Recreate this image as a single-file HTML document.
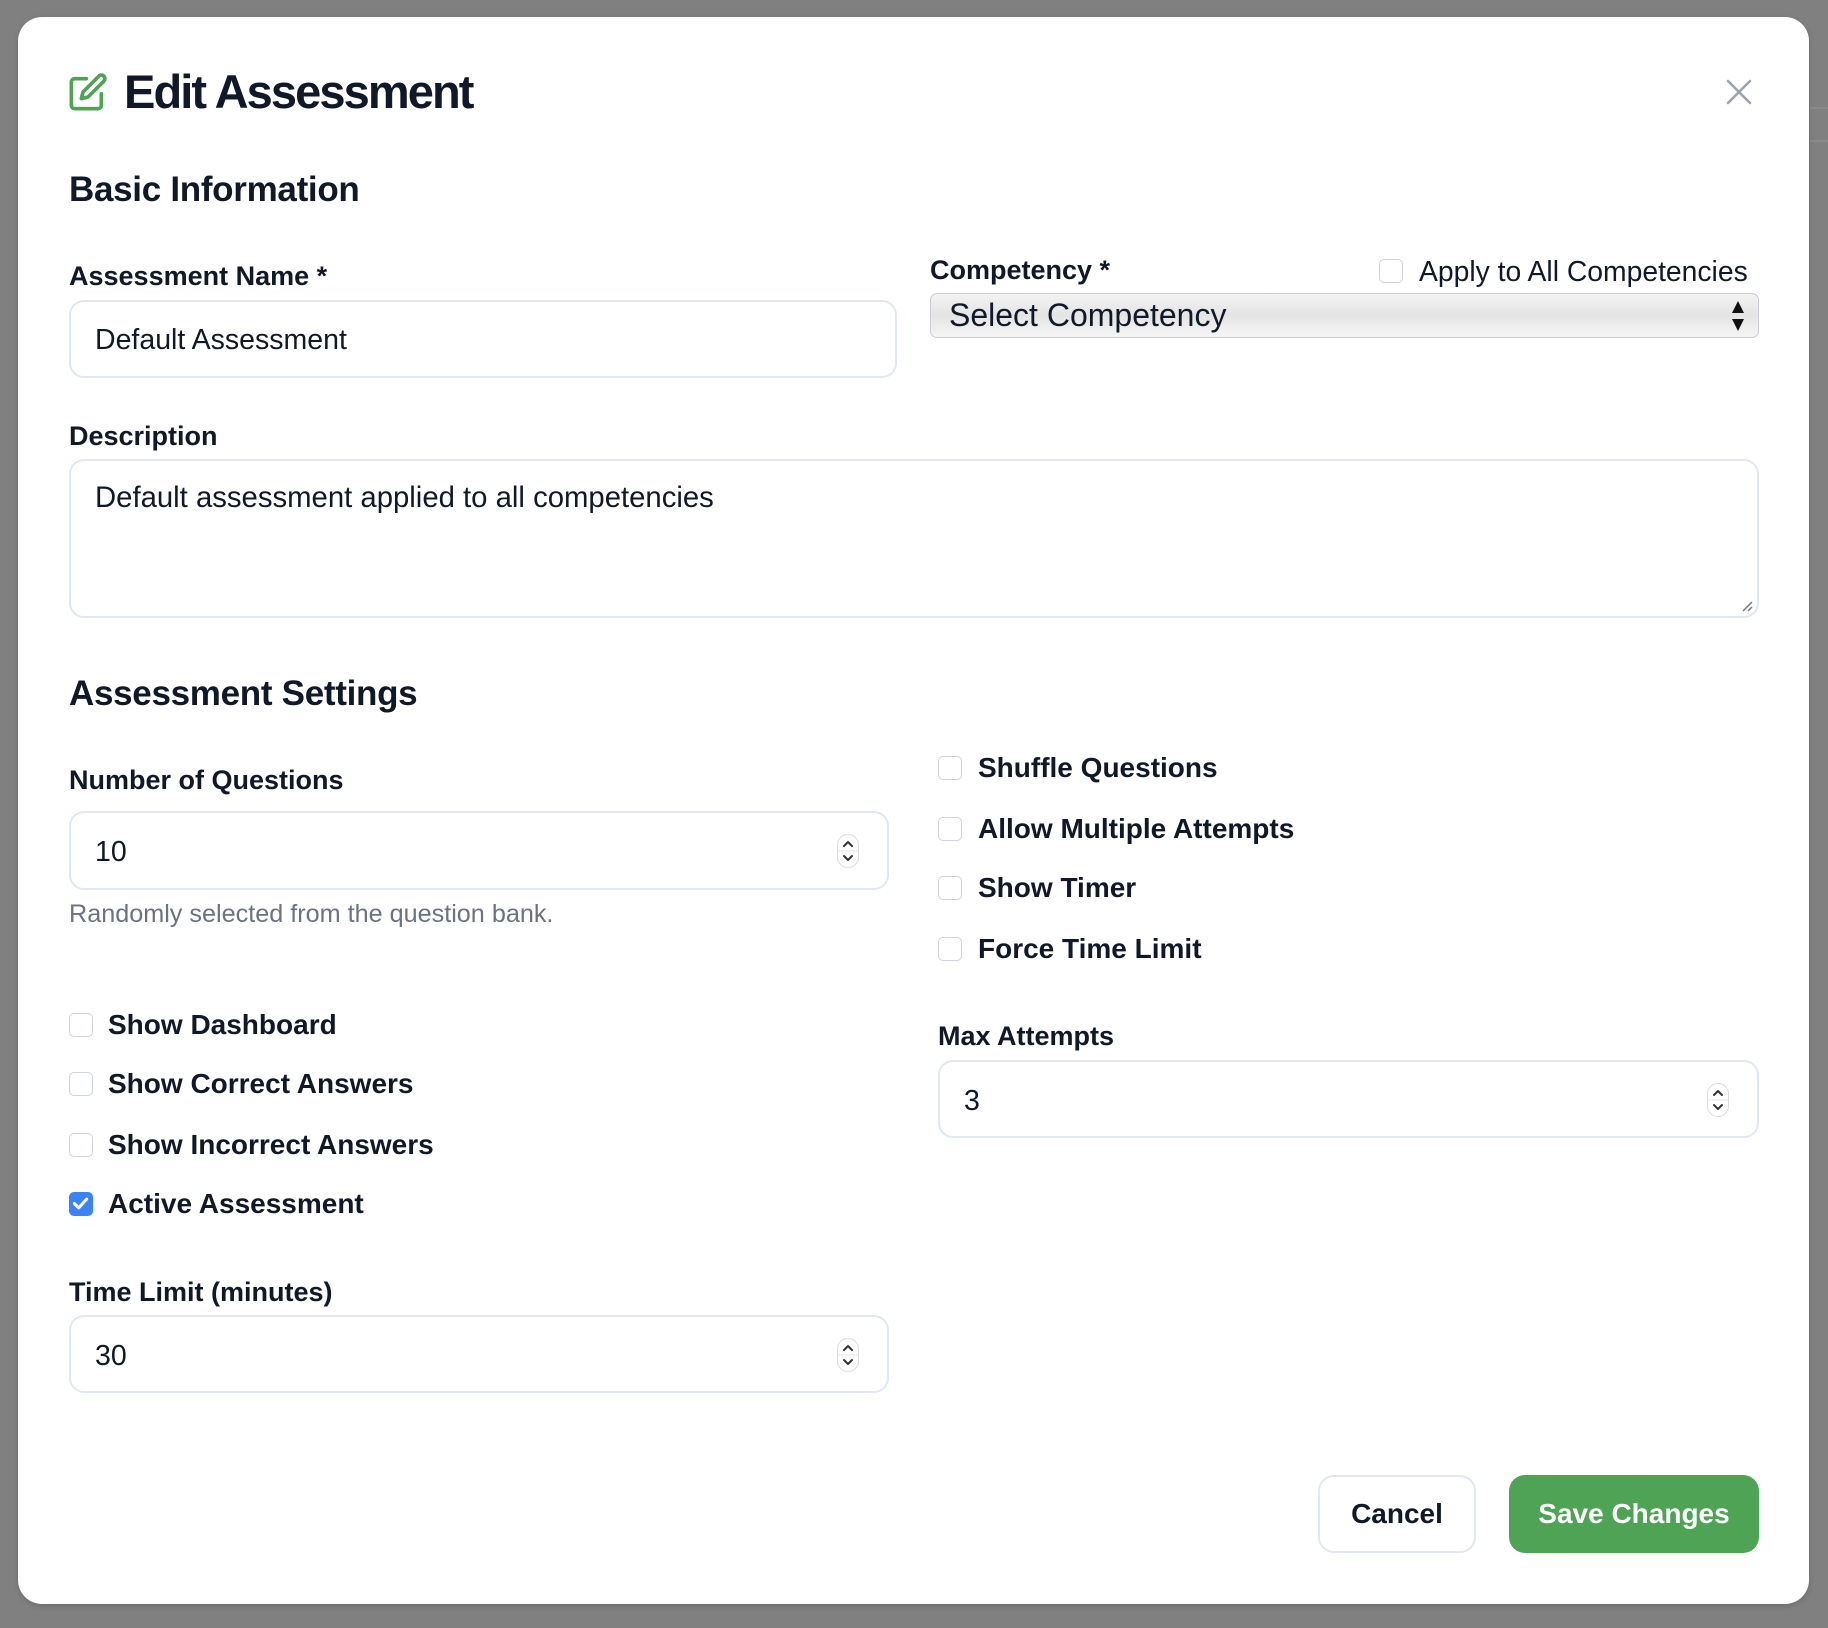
<!DOCTYPE html>
<html><head><meta charset="utf-8"><style>
*{box-sizing:border-box;margin:0;padding:0}
body{width:1828px;height:1628px;background:#808080;font-family:"Liberation Sans",sans-serif;color:#111827;position:relative;overflow:hidden}
.bgl{position:absolute;height:2px;background:#8a8a8a}
.modal{position:absolute;left:18px;top:17px;width:1791px;height:1587px;background:#fff;border-radius:24px;box-shadow:0 2px 6px rgba(0,0,0,.15)}
.a{position:absolute;white-space:nowrap}
.lbl{font-size:27px;font-weight:bold;color:#111827;line-height:1}
.h2{font-size:35px;font-weight:bold;color:#111827;letter-spacing:-0.3px}
.inp{position:absolute;border:2px solid #e2e8f0;border-radius:15px;background:#fff}
.inp span{position:absolute;left:24px;font-size:28.5px;color:#111827}
.cb{position:absolute;width:24px;height:24px;border:1.5px solid #cfd3da;border-radius:5px;background:#fff}
.ct{font-size:28px;font-weight:bold;color:#111827}
.spin{position:absolute;width:22px;height:34px}
</style></head><body>
<div class="bgl" style="left:1810px;top:107px;width:18px"></div>
<div class="bgl" style="left:1810px;top:140px;width:18px"></div>
<div class="modal"></div>
<svg class="a" style="left:68px;top:72px" width="40" height="40" viewBox="0 0 24 24" fill="none" stroke="#4ea355" stroke-width="2.2" stroke-linecap="round" stroke-linejoin="round"><path d="M11 4H4a2 2 0 0 0-2 2v14a2 2 0 0 0 2 2h14a2 2 0 0 0 2-2v-7"/><path d="M18.5 2.5a2.1 2.1 0 0 1 3 3L12 15l-4 1 1-4 9.5-9.5z"/></svg>
<div class="a" style="left:124px;top:64px;font-size:47px;font-weight:bold;letter-spacing:-1.9px;color:#111827">Edit Assessment</div>
<svg class="a" style="left:1726px;top:79px" width="26" height="26" viewBox="0 0 26 26" stroke="#9ca3af" stroke-width="2.6" stroke-linecap="round"><path d="M2 2L24 24M24 2L2 24"/></svg>
<div class="a h2" style="left:69px;top:170px">Basic Information</div>
<div class="a lbl" style="left:69px;top:263px">Assessment Name *</div>
<div class="inp" style="left:69px;top:300px;width:828px;height:78px"><span style="top:22px">Default Assessment</span></div>
<div class="a lbl" style="left:930px;top:257px">Competency *</div>
<div class="cb" style="left:1379px;top:259px"></div>
<div class="a" style="left:1419px;top:255px;font-size:28.3px;color:#111827">Apply to All Competencies</div>
<div class="a" style="left:930px;top:293px;width:829px;height:45px;border:1.5px solid #c8ccd2;border-radius:7px;background:linear-gradient(#f3f3f3,#e4e4e4 50%,#f5f5f5)"></div>
<div class="a" style="left:949px;top:297px;font-size:32px;color:#111827">Select Competency</div>
<svg class="a" style="left:1731px;top:299px" width="14" height="34" viewBox="0 0 14 34" fill="#111"><path d="M7 2L13 14H1z M1 20H13L7 32z"/></svg>
<div class="a lbl" style="left:69px;top:423px">Description</div>
<div class="inp" style="left:69px;top:459px;width:1690px;height:159px"><span style="top:20px;font-size:29.3px">Default assessment applied to all competencies</span></div>
<svg class="a" style="left:1741px;top:600px" width="12" height="12" stroke="#777" stroke-width="1.5"><path d="M11 2L2 11M11 7L7 11"/></svg>
<div class="a h2" style="left:69px;top:674px">Assessment Settings</div>
<div class="a lbl" style="left:69px;top:767px">Number of Questions</div>
<div class="inp" style="left:69px;top:811px;width:820px;height:79px"><span style="top:23px">10</span><svg class="spin" style="left:766px;top:21px" viewBox="0 0 22 34" fill="none"><rect x="0.5" y="0.5" width="21" height="33" rx="10.5" stroke="#d8dbe0" fill="#fff"/><path d="M0.5 17H21.5" stroke="#e5e7eb"/><path d="M7 12L11 8L15 12M7 22L11 26L15 22" stroke="#333" stroke-width="2" stroke-linecap="round" stroke-linejoin="round"/></svg></div>
<div class="a" style="left:69px;top:900px;font-size:25.2px;color:#6b7280">Randomly selected from the question bank.</div>
<div class="cb" style="left:938px;top:756px"></div><div class="a ct" style="left:978px;top:752px">Shuffle Questions</div>
<div class="cb" style="left:938px;top:817px"></div><div class="a ct" style="left:978px;top:813px">Allow Multiple Attempts</div>
<div class="cb" style="left:938px;top:876px"></div><div class="a ct" style="left:978px;top:872px">Show Timer</div>
<div class="cb" style="left:938px;top:937px"></div><div class="a ct" style="left:978px;top:933px">Force Time Limit</div>
<div class="cb" style="left:69px;top:1013px"></div><div class="a ct" style="left:108px;top:1009px">Show Dashboard</div>
<div class="cb" style="left:69px;top:1072px"></div><div class="a ct" style="left:108px;top:1068px">Show Correct Answers</div>
<div class="cb" style="left:69px;top:1133px"></div><div class="a ct" style="left:108px;top:1129px">Show Incorrect Answers</div>
<div class="cb" style="left:69px;top:1192px;background:#3b82f6;border-color:#3b82f6"><svg width="21" height="21" viewBox="0 0 24 24" fill="none" stroke="#fff" stroke-width="3.5" stroke-linecap="round" stroke-linejoin="round"><path d="M5 12l5 5 9-10"/></svg></div><div class="a ct" style="left:108px;top:1188px">Active Assessment</div>
<div class="a lbl" style="left:938px;top:1023px">Max Attempts</div>
<div class="inp" style="left:938px;top:1060px;width:821px;height:78px"><span style="top:23px">3</span><svg class="spin" style="left:767px;top:21px" viewBox="0 0 22 34" fill="none"><rect x="0.5" y="0.5" width="21" height="33" rx="10.5" stroke="#d8dbe0" fill="#fff"/><path d="M0.5 17H21.5" stroke="#e5e7eb"/><path d="M7 12L11 8L15 12M7 22L11 26L15 22" stroke="#333" stroke-width="2" stroke-linecap="round" stroke-linejoin="round"/></svg></div>
<div class="a lbl" style="left:69px;top:1279px">Time Limit (minutes)</div>
<div class="inp" style="left:69px;top:1315px;width:820px;height:78px"><span style="top:23px">30</span><svg class="spin" style="left:766px;top:21px" viewBox="0 0 22 34" fill="none"><rect x="0.5" y="0.5" width="21" height="33" rx="10.5" stroke="#d8dbe0" fill="#fff"/><path d="M0.5 17H21.5" stroke="#e5e7eb"/><path d="M7 12L11 8L15 12M7 22L11 26L15 22" stroke="#333" stroke-width="2" stroke-linecap="round" stroke-linejoin="round"/></svg></div>
<div class="a" style="left:1318px;top:1475px;width:158px;height:78px;border:2px solid #e2e8f0;border-radius:16px;background:#fff;text-align:center;line-height:74px;font-size:28px;font-weight:bold;color:#111827">Cancel</div>
<div class="a" style="left:1509px;top:1475px;width:250px;height:78px;border-radius:16px;background:#4ea355;text-align:center;line-height:78px;font-size:28px;font-weight:bold;color:#fff">Save Changes</div>
</body></html>
